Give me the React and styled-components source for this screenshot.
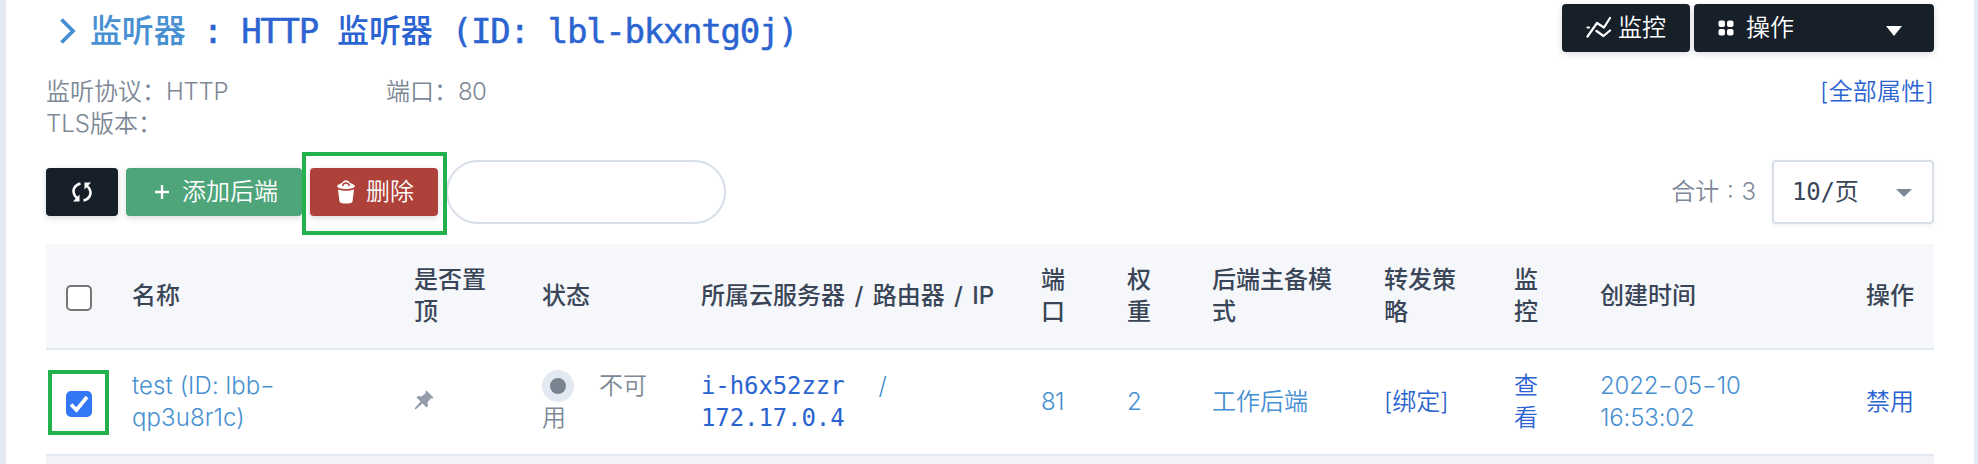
import React from 'react';
import styled, { createGlobalStyle } from 'styled-components';

const sans = '"Inter", "Noto Sans CJK SC", sans-serif';
const mono = '"DejaVu Sans Mono", "Noto Sans CJK SC", monospace';
const blue = '#2b64d1';
const sky = '#4790d2';
const grey = '#7d8896';

const GlobalStyle = createGlobalStyle`
  * { box-sizing: border-box; }
  body { margin: 0; background: #e3e9f2; font: 350 24px/32px ${sans}; color: ${grey}; }
`;

const Panel = styled.main`
  position: relative;
  height: 464px;
  margin: 0 4px 0 6px;
  padding: 4px 40px 0;
  background: #fff;
  overflow: hidden;
`;
const Bar = styled.div`
  display: flex;
  justify-content: space-between;
  align-items: ${(p) => p.$align || 'center'};
  height: ${(p) => p.$h}px;
`;
const Group = styled.div`
  display: flex;
  align-items: center;
  gap: ${(p) => p.$gap || 0}px;
`;
const Title = styled.h1`
  display: flex;
  align-items: center;
  margin: 0 0 0 13px;
  height: 54px;
  font: 500 32px/54px ${mono};
  letter-spacing: -0.15px;
  color: ${blue};
  white-space: pre;
`;
const TitleLatin = styled.span`
  font-size: 34px;
  letter-spacing: -1.28px;
  -webkit-text-stroke: 0.5px currentColor;
`;
const Crumb = styled.span`
  margin: 0 -2px 0 13px;
  color: ${sky};
`;
const Button = styled.button`
  display: flex;
  align-items: center;
  width: ${(p) => p.$w}px;
  height: 48px;
  padding: 0 0 0 ${(p) => p.$pad}px;
  gap: ${(p) => p.$gap || 0}px;
  border: 0;
  border-radius: 4px;
  background: ${(p) => p.$bg || '#171f29'};
  box-shadow: 0 2px 6px rgba(20, 30, 50, 0.16);
  color: #fff;
  font: 350 24px/32px ${sans};
  white-space: nowrap;
`;
const Caret = styled.i`
  margin-left: auto;
  margin-right: ${(p) => p.$right}px;
  border: solid transparent;
  border-width: ${(p) => p.$h}px 8px 0;
  border-top-color: ${(p) => p.$c};
  position: relative;
  top: ${(p) => p.$dy}px;
`;
const Info = styled.dl`
  display: grid;
  grid-template-columns: 340px 300px;
  margin: 0;
`;
const InfoItem = styled.div`
  height: 32px;
  white-space: pre;
`;
const Latin = styled.span`
  letter-spacing: ${(p) => p.$ls}px;
`;
const Dash = styled.span`
  display: inline-block;
  padding: 0 2px;
  transform: scaleX(1.35);
`;
const Link = styled.a`
  color: ${blue};
  letter-spacing: 0.2px;
  white-space: nowrap;
`;
const Total = styled.span`
  word-spacing: 1px;
`;
const Search = styled.input`
  width: 280px;
  height: 64px;
  border: 2px solid #d8dfe9;
  border-radius: 32px;
  background: #fff;
`;
const PageSize = styled.div`
  display: flex;
  align-items: center;
  width: 162px;
  height: 64px;
  padding-left: 18px;
  border: 2px solid #d8dfe9;
  border-radius: 4px;
  box-shadow: 0 2px 4px rgba(20, 30, 50, 0.06);
  font: 400 24px/32px ${mono};
  letter-spacing: -0.2px;
  color: #3a4658;
`;
const Table = styled.table`
  width: 1888px;
  margin-top: 20px;
  table-layout: fixed;
  border-collapse: separate;
  border-spacing: 0;
`;
const Row = styled.tr`
  height: 106px;
  background: ${(p) => p.$bg || '#fff'};
`;
const Th = styled.th`
  padding: 0 0 0 20px;
  border-bottom: 2px solid #e3e9f0;
  text-align: left;
  vertical-align: middle;
  font-weight: 500;
  word-spacing: 3px;
  color: #3a4658;
  &:not(:last-child) { padding-right: 20px; }
`;
const Td = styled.td`
  padding: 0 0 0 20px;
  border-bottom: 2px solid #e3e9f0;
  vertical-align: middle;
  color: ${(p) => p.$c || sky};
  letter-spacing: ${(p) => p.$ls || 0}px;
  font-family: ${(p) => (p.$mono ? mono : sans)};
  font-weight: ${(p) => (p.$mono ? 400 : 350)};
  padding-right: ${(p) => p.$pr || 0}px;
`;
const Check = styled.span`
  display: flex;
  align-items: center;
  justify-content: center;
  width: 26px;
  height: 26px;
  margin-top: 4px;
  border: ${(p) => (p.$on ? '0' : '2px solid #767676')};
  border-radius: 5px;
  background: ${(p) => (p.$on ? '#3277f6' : '#fff')};
`;
const Dot = styled.i`
  display: inline-block;
  width: 32px;
  height: 32px;
  margin: 0 25px 0 0;
  border: 8px solid #e3e9f1;
  border-radius: 50%;
  background: #7a8491;
  vertical-align: top;
`;
const Slash = styled.span`
  margin-left: 34px;
  font: 350 24px/32px ${sans};
  color: ${sky};
`;
const Outline = styled.div`
  position: absolute;
  left: ${(p) => p.$x}px;
  top: ${(p) => p.$y}px;
  width: ${(p) => p.$w}px;
  height: ${(p) => p.$h}px;
  border: 4px solid #23b14d;
  pointer-events: none;
`;

const Chevron = () => (
  <svg width="18" height="28" viewBox="0 0 18 28" fill="none" stroke={sky} strokeWidth="3.8">
    <path d="M2.5 2.5 14 14 2.5 25.5" />
  </svg>
);
const Trend = () => (
  <svg width="26" height="24" viewBox="0 0 26 24" fill="none" stroke="#fff" strokeWidth="2.2" strokeLinecap="round" strokeLinejoin="round">
    <path d="M1.5 20.5 11 7l7 4.500L24 2M10.500 15l7 5 6.500-5.500" />
    <path d="M1.500 11.500h1.500" />
  </svg>
);
const Dots = () => (
  <svg width="16" height="16" viewBox="0 0 16 16" fill="#fff">
    <rect x="0.500" y="0.500" width="6.500" height="6.500" rx="2" />
    <rect x="9" y="0.500" width="6.500" height="6.500" rx="2" />
    <rect x="0.500" y="9" width="6.500" height="6.500" rx="2" />
    <rect x="9" y="9" width="6.500" height="6.500" rx="2" />
  </svg>
);
const Sync = () => (
  <svg width="20" height="22" viewBox="0 0 20 22" fill="none" stroke="#fff" strokeWidth="2.600">
    <path d="M8.500 2.500C2.500 4 0 9 2.500 14c.8 1.500 1.700 2.600 3 3.500M11.500 19.500C17.500 18 20 13 17.500 8c-.8-1.500-1.700-2.600-3-3.500" />
    <path d="M7.500 13.500V20.500H1zM12.500 8.500V1.500H19z" fill="#fff" stroke="none" />
  </svg>
);
const Plus = () => (
  <svg width="14" height="14" viewBox="0 0 14 14" stroke="#fff" strokeWidth="2.400">
    <path d="M7 0v14M0 7h14" />
  </svg>
);
const Trash = () => (
  <svg width="18" height="24" viewBox="0 0 18 24" fill="#fff">
    <path d="M0 6C1 4.500 3 3.500 5 3 6 1 7.500.500 9 .500s3 .5 4 2.500c2 .5 4 1.500 5 3-.5 2-4 3-9 3S.500 8 0 6z" />
    <path d="M1 9.500q8 2.500 16 0L15.500 21.500Q15 23.500 9 23.500T2.500 21.500z" />
    <path d="M5.500 6C6 4 7.500 3 9 3s3 1 3.500 3" fill="none" stroke="#ae413a" strokeWidth="1.300" />
  </svg>
);
const Pin = () => (
  <svg width="20" height="20" viewBox="0 0 20 20" fill="#959dab">
    <path d="M12.500 .500 19.500 7.500 18.500 8.500l-1.500-.2-3.500 4 .5 3.700-1.500 1.500-4-4L1.500 19.500.500 18.500 6.500 11.500 2.500 7.500 4 6l3.700.5 4-3.500-.2-1.500z" />
  </svg>
);
const Tick = () => (
  <svg width="20" height="20" viewBox="0 0 20 20" fill="none" stroke="#fff" strokeWidth="3.600">
    <path d="M2 10.500 7.500 16 18 3" />
  </svg>
);

const columns = [
  [66, ''], [282, '名称'], [128, '是否置顶'], [159, '状态'], [340, '所属云服务器 / 路由器 / IP'],
  [86, '端口'], [85, '权重'], [172, '后端主备模式'], [130, '转发策略'], [86, '监控'], [266, '创建时间'], [88, '操作'],
];

export default function App() {
  return (
    <>
      <GlobalStyle />
      <Panel>
        <Bar $h={72} $align="flex-start">
          <Title>
            <Chevron />
            <Crumb>监听器</Crumb>
            <TitleLatin>{' : HTTP '}</TitleLatin>监听器<TitleLatin>{' (ID: lbl-bkxntg0j)'}</TitleLatin>
          </Title>
          <Group $gap={4}>
            <Button $w={128} $pad={24} $gap={6}><Trend />监控</Button>
            <Button $w={240} $pad={24} $gap={12}><Dots />操作<Caret $h={10} $c="#fff" $right={32} $dy={3} /></Button>
          </Group>
        </Bar>
        <Bar $h={84} $align="flex-start">
          <Info>
            <InfoItem>监听协议：<Latin $ls={-0.3}>HTTP</Latin></InfoItem>
            <InfoItem>端口：<Latin $ls={-0.6}>80</Latin></InfoItem>
            <InfoItem><Latin $ls={0}>TLS</Latin>版本：</InfoItem>
          </Info>
          <Link>[全部属性]</Link>
        </Bar>
        <Bar $h={64}>
          <Group $gap={8}>
            <Button $w={72} $pad={26}><Sync /></Button>
            <Button $w={176} $pad={29} $gap={13} $bg="#4ea57a"><Plus />添加后端</Button>
            <Button $w={128} $pad={27} $gap={11} $bg="#ae413a"><Trash />删除</Button>
            <Search />
          </Group>
          <Group $gap={16}>
            <Total>合计 : 3</Total>
            <PageSize>10/页<Caret $h={8} $c="#7d8896" $right={20} $dy={1} /></PageSize>
          </Group>
        </Bar>
        <Table>
          <colgroup>{columns.map(([w], i) => <col key={i} width={w} />)}</colgroup>
          <thead>
            <Row $bg="#f5f7fb">
              {columns.map(([, label], i) => <Th key={i}>{i ? label : <Check />}</Th>)}
            </Row>
          </thead>
          <tbody>
            <Row>
              <Td><Check $on><Tick /></Check></Td>
              <Td $ls={0.1}>test (ID: lbb<Dash>-</Dash><br />qp3u8r1c)</Td>
              <Td><Pin /></Td>
              <Td $c={grey} $pr={20}><Dot />不可用</Td>
              <Td $mono $c={blue} $ls={-0.1}>i-h6x52zzr<Slash>/</Slash><br />172.17.0.4</Td>
              <Td $ls={-0.6}>81</Td>
              <Td>2</Td>
              <Td>工作后端</Td>
              <Td $c={blue}>[绑定]</Td>
              <Td $c={blue} $pr={20}>查看</Td>
              <Td $ls={-0.15}>2022<Dash>-</Dash>05<Dash>-</Dash>10<br />16:53:02</Td>
              <Td $c={blue}>禁用</Td>
            </Row>
            <Row $bg="#f2f4f8"><Td colSpan={12} /></Row>
          </tbody>
        </Table>
        <Outline $x={296} $y={152} $w={145} $h={83} />
        <Outline $x={42} $y={370} $w={61} $h={65} />
      </Panel>
    </>
  );
}
